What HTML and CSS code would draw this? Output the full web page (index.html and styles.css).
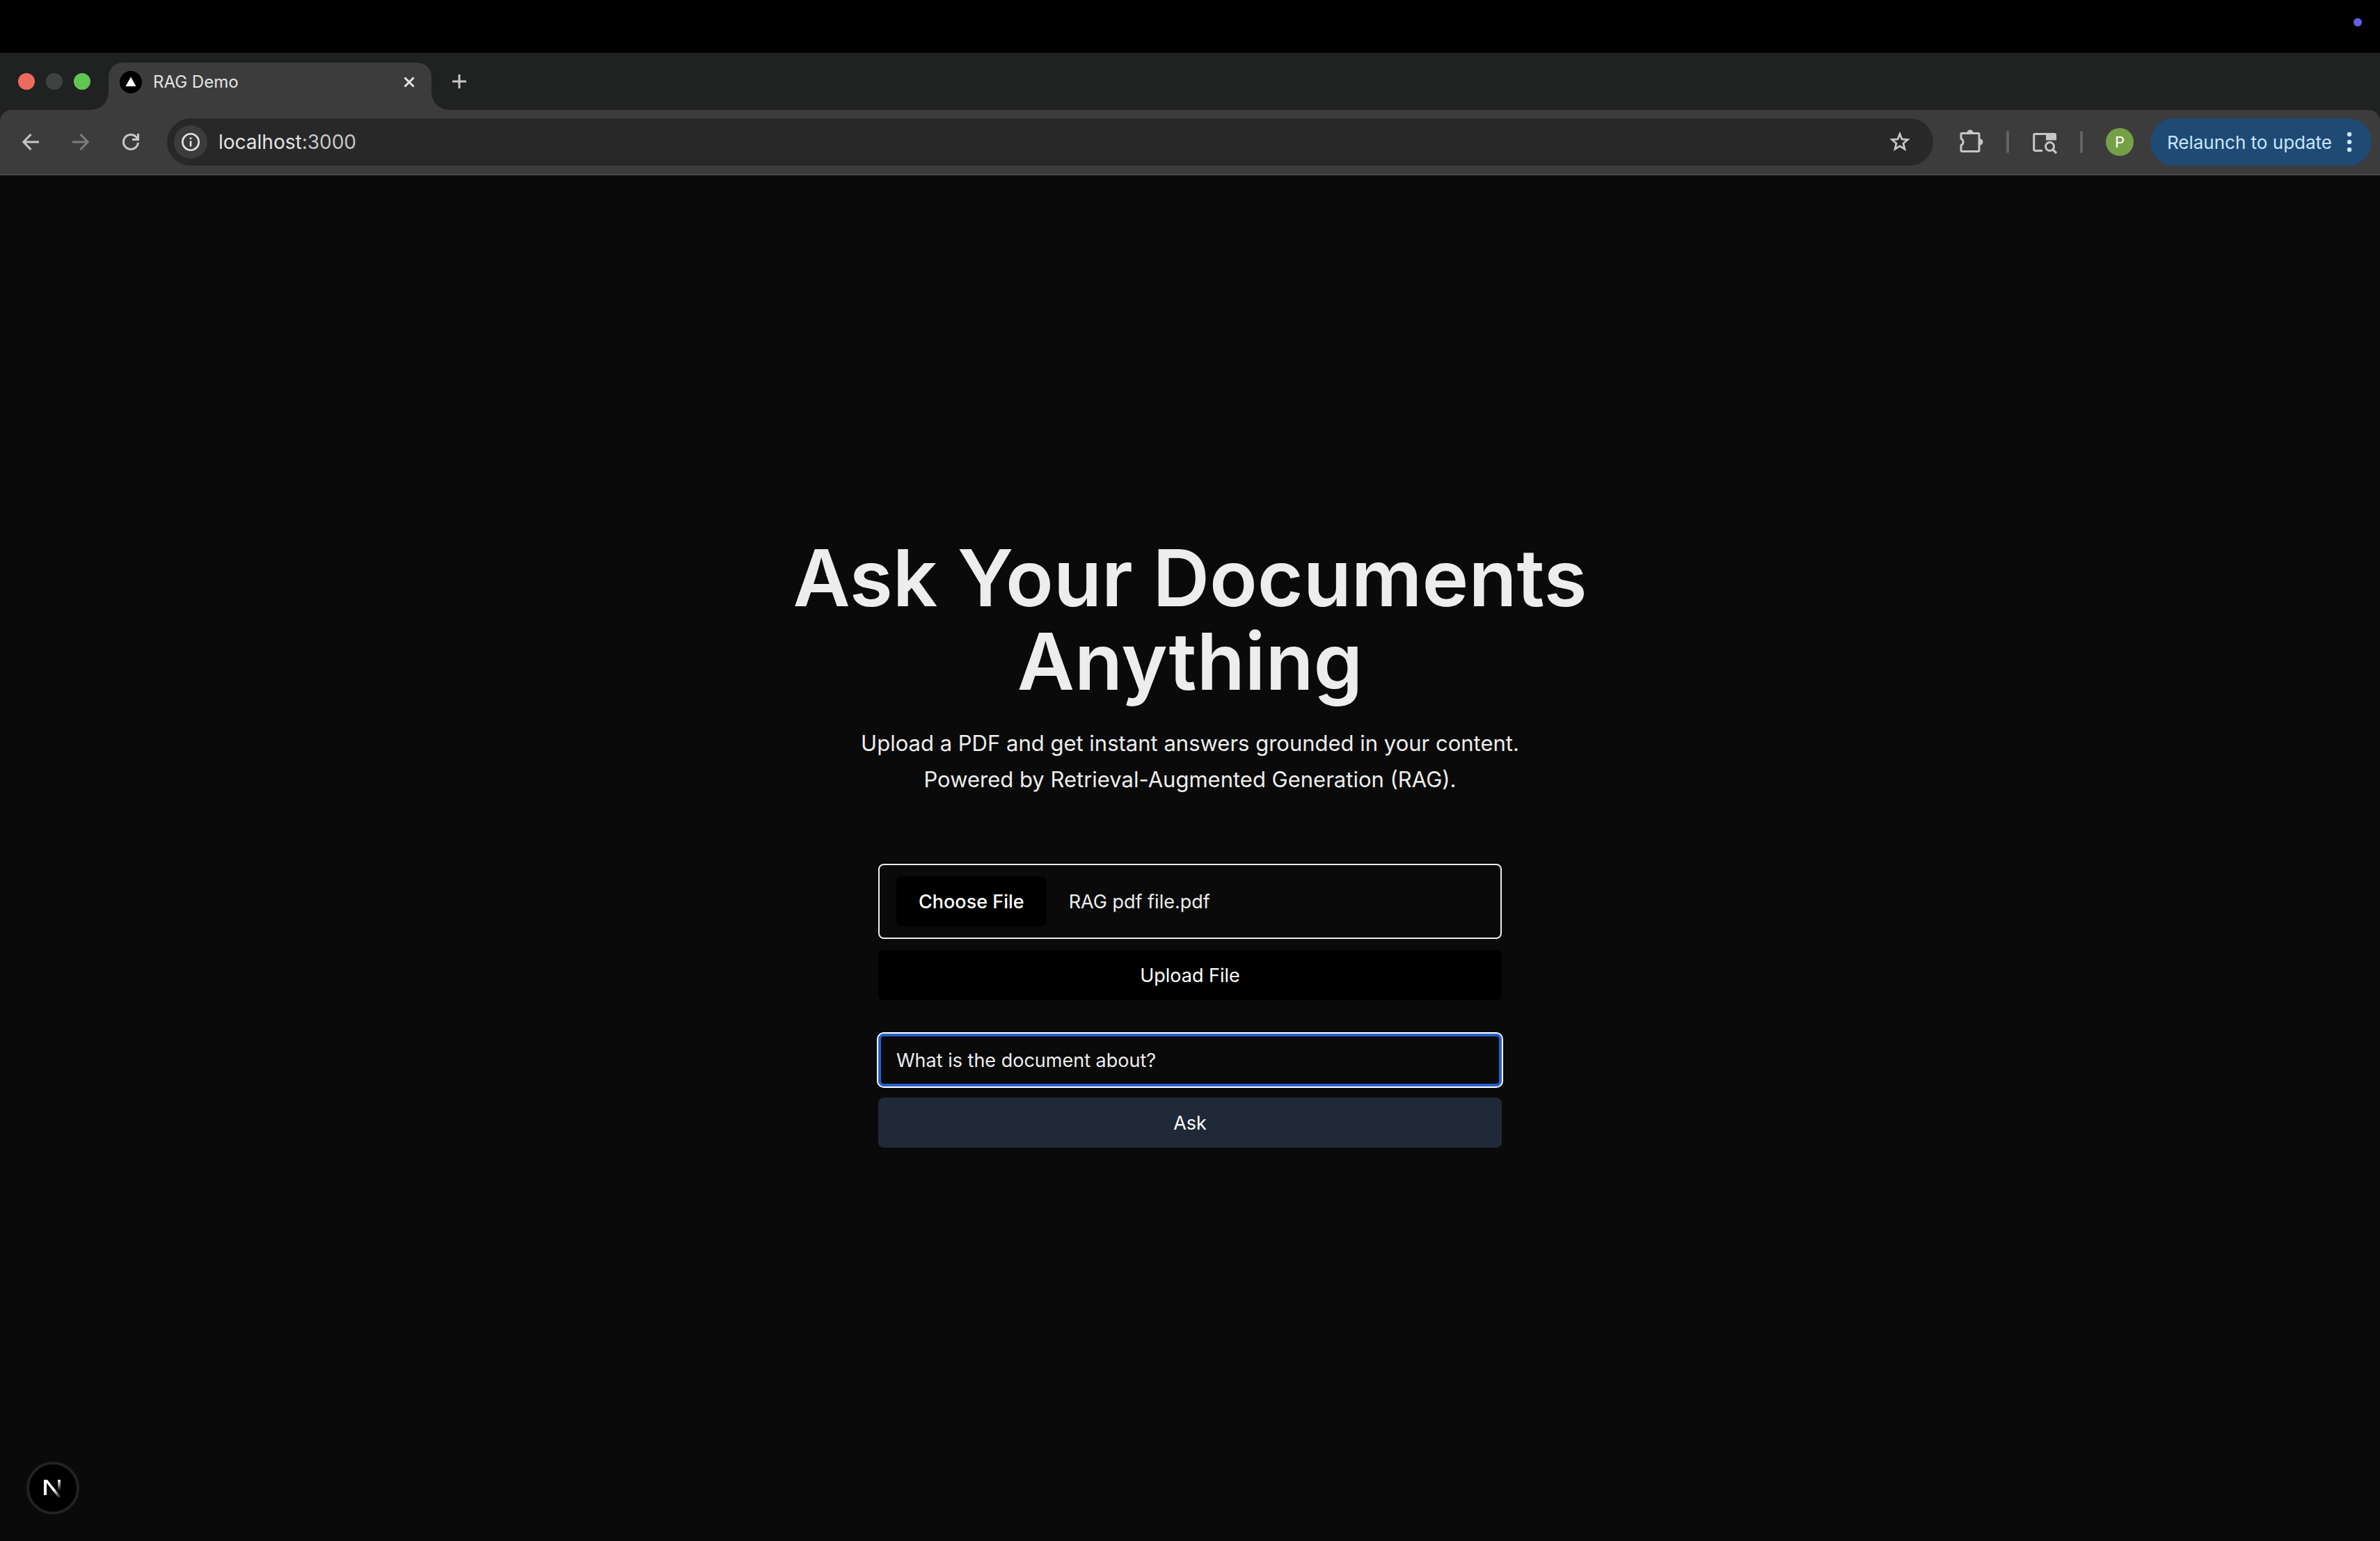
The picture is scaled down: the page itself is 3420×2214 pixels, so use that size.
FILE: index.html
```html
<!DOCTYPE html>
<html lang="en">
<head>
<meta charset="utf-8">
<title>RAG Demo</title>
<link rel="stylesheet" href="styles.css">
</head>
<body>
<div class="menubar"><span class="recording-dot"></span></div>
<header class="browser">
  <div class="tabstrip">
    <div class="lights"><span class="light light-close"></span><span class="light light-min"></span><span class="light light-max"></span></div>
    <div class="tab">
      <svg class="favicon" viewBox="0 0 32 32"><circle cx="16" cy="16" r="16" fill="#000"/><path d="M16 8.500 23.500 22H8.500z" fill="#fff"/></svg>
      <span class="tab-title">RAG Demo</span>
      <button class="icon-button" aria-label="Close tab"><svg width="24" height="24" viewBox="0 0 24 24"><path d="M5.500 5.500l13 13M18.500 5.500l-13 13" stroke="#e3e3e3" stroke-width="3" fill="none"/></svg></button>
    </div>
    <button class="icon-button new-tab" aria-label="New tab"><svg width="24" height="24" viewBox="0 0 24 24"><path d="M12 2v20M2 12h20" stroke="#c7c7c7" stroke-width="3" fill="none"/></svg></button>
  </div>
  <nav class="toolbar" aria-label="Browser">
    <div class="nav-buttons">
      <button class="icon-button" aria-label="Back"><svg width="24" height="24" viewBox="0 0 24 24"><path d="M24 12H2M12.500 1 1.800 12l10.700 11" stroke="#c7c7c7" stroke-width="3" fill="none"/></svg></button>
      <button class="icon-button" aria-label="Forward"><svg width="24" height="24" viewBox="0 0 24 24"><path d="M0 12h22M11.500 1l10.700 11-10.700 11" stroke="#7c7c7c" stroke-width="3" fill="none"/></svg></button>
      <button class="icon-button" aria-label="Reload"><svg width="24" height="24" viewBox="0 0 24 24"><path d="M22.400 13A10.500 10.500 0 1 1 20 5.200L22 8" stroke="#c7c7c7" stroke-width="3" fill="none"/><path d="M22.500 0v8.500H14" stroke="#c7c7c7" stroke-width="3" fill="none"/></svg></button>
    </div>
    <div class="omnibox">
      <button class="site-info" aria-label="Site information"><svg width="28" height="28" viewBox="0 0 28 28"><circle cx="14" cy="14" r="11.700" stroke="#e3e3e3" stroke-width="2.600" fill="none"/><path d="M14 12.500v8M14 7.500v2.600" stroke="#e3e3e3" stroke-width="2.600"/></svg></button>
      <span class="url">localhost<span class="port">:3000</span></span>
      <button class="icon-button" aria-label="Bookmark"><svg width="32" height="32" viewBox="0 0 32 32"><path d="M16 4.500l3 7.500 8.300.700-6.300 5.300 2 8.300-7-4.400-7 4.400 2-8.300-6.300-5.300 8.300-.7z" stroke="#c7c7c7" stroke-width="2.800" fill="none"/></svg></button>
    </div>
    <div class="actions">
      <button class="icon-button" aria-label="Extensions"><svg width="36" height="36" viewBox="0 0 36 36"><path d="M5.500 5.500h23a1.500 1.500 0 0 1 1.500 1.500v23a1.500 1.500 0 0 1-1.500 1.500h-23A1.500 1.500 0 0 1 4 30v-7.200a5.300 5.300 0 0 0 0-9.600V7a1.500 1.500 0 0 1 1.500-1.500z" stroke="#c7c7c7" stroke-width="3" fill="none"/><path d="M12.500 5a4.500 4.500 0 0 1 9 0zM31 13.500a4.500 4.500 0 0 1 0 9z" fill="#c7c7c7"/></svg></button>
      <span class="divider"></span>
      <button class="icon-button" aria-label="Search this page"><svg width="36" height="36" viewBox="0 0 36 36"><path d="M15 30.500H4.500a1.800 1.800 0 0 1-1.800-1.800V8.300a1.800 1.800 0 0 1 1.800-1.800H33" stroke="#c7c7c7" stroke-width="3" fill="none"/><path d="M20 5h12a3 3 0 0 1 3 3v7.500H20z" fill="#c7c7c7"/><circle cx="25.500" cy="24.500" r="6" stroke="#c7c7c7" stroke-width="3" fill="none"/><path d="M29.500 28.500l5.500 5.500" stroke="#c7c7c7" stroke-width="3.200"/></svg></button>
      <span class="divider"></span>
      <button class="avatar" aria-label="Profile">P</button>
      <button class="relaunch">Relaunch to update<svg width="8" height="30" viewBox="0 0 8 30" fill="#c7e6ff"><circle cx="4" cy="4" r="3.200"/><circle cx="4" cy="15" r="3.200"/><circle cx="4" cy="26" r="3.200"/></svg></button>
    </div>
  </nav>
</header>
<main class="page">
  <section class="hero">
    <h1>Ask Your Documents<br>Anything</h1>
    <p>Upload a PDF and get instant answers grounded in your content.<br>Powered by Retrieval-Augmented Generation (RAG).</p>
  </section>
  <form class="form" onsubmit="return false">
    <input class="file" id="file" type="file" aria-label="PDF document">
    <button class="button" type="button">Upload File</button>
    <input class="question" type="text" value="What is the document about?" aria-label="Question">
    <button class="button button-ask" type="submit">Ask</button>
  </form>
</main>
<button class="dev-badge" aria-label="Next.js dev tools">
  <svg width="28" height="32" viewBox="0 0 28 32">
    <defs>
      <linearGradient id="diag" gradientUnits="userSpaceOnUse" x1="16" y1="18" x2="25" y2="30"><stop offset="0" stop-color="#fff"/><stop offset="1" stop-color="#fff" stop-opacity="0"/></linearGradient>
      <linearGradient id="stem" gradientUnits="userSpaceOnUse" x1="0" y1="4" x2="0" y2="20"><stop offset="0" stop-color="#fff"/><stop offset="1" stop-color="#fff" stop-opacity="0"/></linearGradient>
    </defs>
    <path d="M1 4h5L26 29l-3.200 2.200L5 8.500V26H1z" fill="url(#diag)"/>
    <path d="M21 4h4v16h-4z" fill="url(#stem)"/>
  </svg>
</button>
<script src="script.js"></script>
</body>
</html>
```
FILE: styles.css
```css
* { box-sizing: border-box; }
html { height: 100%; }
body {
  margin: 0;
  min-height: 100%;
  display: flex;
  flex-direction: column;
  background: #0a0a0a;
  color: #ededed;
  font-family: Inter, "Liberation Sans", sans-serif;
}
button, input { font: inherit; color: inherit; }
button { border: 0; padding: 0; background: none; }
svg { display: block; flex: none; }

.menubar {
  height: 76px;
  background: #000;
  display: flex;
  justify-content: flex-end;
  align-items: flex-start;
  padding: 26px;
}
.recording-dot { width: 12px; height: 12px; border-radius: 50%; background: #6260e8; }

.browser { background: #1f2221; }
.tabstrip { height: 82px; display: flex; padding: 14px 26px 0; }
.lights { display: flex; gap: 16px; padding-top: 15px; margin-right: 26px; }
.light { width: 24px; height: 24px; border-radius: 50%; }
.light-close { background: #ed6a5e; }
.light-min { background: #404241; }
.light-max { background: #61c554; }

.tab {
  position: relative;
  width: 464px;
  height: 68px;
  border-radius: 20px 20px 0 0;
  background: #3c3c3c;
  display: flex;
  align-items: center;
  padding: 0 20px 12px 16px;
}
.tab::before, .tab::after {
  content: "";
  position: absolute;
  bottom: 0;
  width: 24px;
  height: 24px;
}
.tab::before { right: 100%; background: radial-gradient(circle at 0 0, transparent 23px, #3c3c3c 24px); }
.tab::after { left: 100%; background: radial-gradient(circle at 100% 0, transparent 23px, #3c3c3c 24px); }
.favicon { width: 32px; height: 32px; }
.tab-title { flex: 1; margin-left: 16px; font-size: 24px; line-height: 32px; color: #e3e3e3; }
.new-tab { height: 53px; margin-left: 28px; }

.toolbar {
  height: 94px;
  display: flex;
  align-items: center;
  padding: 0 12px 0 32px;
  background: #3c3c3c;
  border-bottom: 2px solid #474747;
  border-radius: 16px 16px 0 0;
}
.nav-buttons { display: flex; gap: 48px; margin-right: 40px; }
.omnibox {
  flex: 1;
  height: 68px;
  display: flex;
  align-items: center;
  padding: 0 32px 0 10px;
  border-radius: 34px;
  background: #282828;
}
.site-info {
  width: 48px;
  height: 48px;
  display: grid;
  place-items: center;
  border-radius: 50%;
  background: #3c3c3c;
}
.url { flex: 1; margin-left: 16px; font-size: 28px; line-height: 36px; color: #e3e3e3; }
.port { color: #c7c7c7; }
.actions { display: flex; align-items: center; margin-left: 36px; }
.divider { width: 4px; height: 32px; margin: 0 33px; border-radius: 2px; background: #636363; }
.avatar {
  width: 40px;
  height: 40px;
  border-radius: 50%;
  background: #75a047;
  color: #fff;
  font-size: 22px;
  line-height: 40px;
}
.relaunch {
  height: 68px;
  display: flex;
  align-items: center;
  gap: 21px;
  margin-left: 24px;
  padding: 0 28px 0 24px;
  border-radius: 34px;
  background: #1f4a73;
  color: #c7e6ff;
  font-size: 26px;
}

.page {
  flex: 1;
  display: flex;
  flex-direction: column;
  align-items: center;
  padding: 518px 32px 64px;
}
.hero { text-align: center; }
h1 { margin: 0; font-size: 113px; line-height: 120px; font-weight: 600; }
.hero p { margin: 32px 0 0; font-size: 31px; line-height: 52px; }
.form { width: 100%; max-width: 896px; margin-top: 95px; display: flex; flex-direction: column; gap: 16px; }
.file, .question, .button { width: 100%; border-radius: 8px; font-size: 27px; }
.file { height: 108px; padding: 16px 24px; border: 2px solid #ededed; }
.file::file-selector-button {
  height: 72px;
  margin: 0 32px 0 0;
  padding: 0 32px;
  border: 0;
  border-radius: 8px;
  background: #000;
  color: #fff;
  font-family: inherit;
  font-size: 27px;
  font-weight: 500;
}
.button { height: 72px; background: #000; color: #fff; }
.question {
  height: 76px;
  margin-top: 32px;
  padding: 0 22px;
  border: 4px solid #2860cb;
  outline: 2px solid #fff;
  background: #0a0a0a;
}
.button-ask { background: #1f2937; }

.dev-badge {
  position: fixed;
  left: 38px;
  bottom: 38px;
  width: 76px;
  height: 76px;
  display: grid;
  place-items: center;
  border: 4px solid #222;
  border-radius: 50%;
  background: #000;
}
```
FILE: script.js
```js
const chosen = new DataTransfer();
chosen.items.add(new File([""], "RAG pdf file.pdf", { type: "application/pdf" }));
document.getElementById("file").files = chosen.files;
```
